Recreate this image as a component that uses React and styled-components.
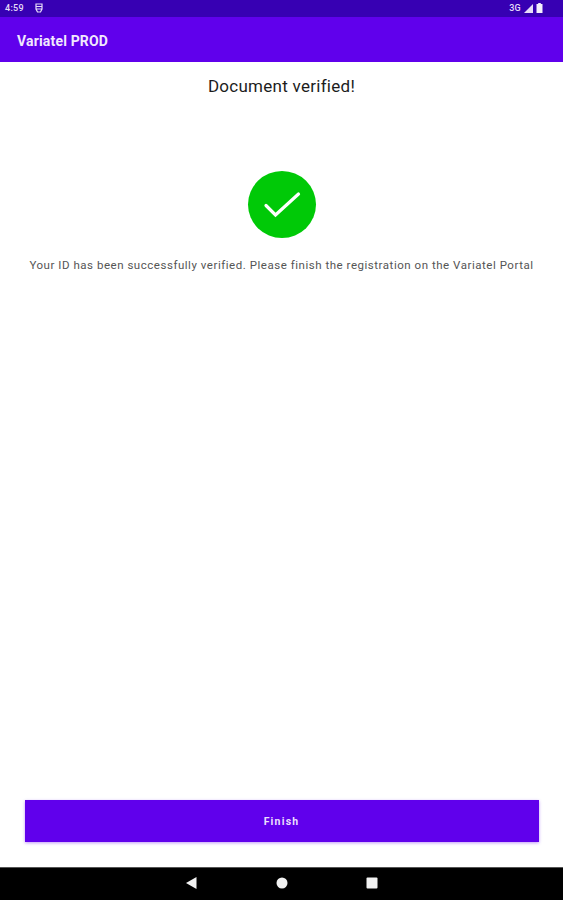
import { createGlobalStyle } from 'styled-components'
import styled from 'styled-components'

const GlobalStyle = createGlobalStyle`
    html, body {
        margin: 0;
        padding: 0;
        background: #ffffff;
    }
    * {
        box-sizing: border-box;
    }
`

const Screen = styled.div`
    width: 563px;
    height: 900px;
    display: flex;
    flex-direction: column;
    font-family: Roboto, "Liberation Sans", sans-serif;
    overflow: hidden;
`

const StatusBar = styled.div`
    height: 17px;
    flex-shrink: 0;
    background: #3700b3;
    color: #e6dcf8;
    display: flex;
    align-items: center;
    justify-content: space-between;
    padding: 0 20px 1px 5px;
    font-size: 9px;
    font-weight: 500;
    letter-spacing: 0.3px;
`

const StatusGroup = styled.div`
    display: flex;
    align-items: center;
    gap: ${({ $gap }) => $gap}px;
`

const AppBar = styled.header`
    height: 45px;
    flex-shrink: 0;
    background: #6000ec;
    color: #f1e8fd;
    display: flex;
    align-items: center;
    padding: 2px 0 0 17px;
    font-size: 14px;
    font-weight: 700;
    letter-spacing: 0.17px;
`

const Content = styled.main`
    flex: 1;
    display: flex;
    flex-direction: column;
    align-items: center;
    padding: 13px 25px 25px;
`

const Title = styled.h1`
    margin: 0;
    font-size: 17px;
    line-height: 22px;
    font-weight: 400;
    letter-spacing: 0.27px;
    color: #1c1c1c;
`

const SuccessBadge = styled.div`
    width: 68px;
    height: 67px;
    margin-top: 74px;
    border-radius: 50%;
    background: #00c907;
    display: flex;
    align-items: center;
    justify-content: center;
`

const Message = styled.p`
    margin: 19px 0 0;
    font-size: 11.5px;
    line-height: 16px;
    letter-spacing: 0.53px;
    color: #555555;
    white-space: nowrap;
`

const FinishButton = styled.button`
    width: 514px;
    height: 42px;
    margin-top: auto;
    border: 0;
    background: #6000ec;
    color: #eadffc;
    font-family: inherit;
    font-size: 10.5px;
    font-weight: 700;
    letter-spacing: 1.2px;
    box-shadow: 0 1px 3px rgba(98, 0, 238, 0.4);
`

const NavBar = styled.nav`
    height: 33px;
    flex-shrink: 0;
    background: #000000;
    border-top: 1px solid #555555;
    display: flex;
    align-items: center;
    justify-content: center;
    gap: 78px;
    padding: 0 0 2px;
`

function CheckIcon() {
    return (
        <svg width="38" height="28" viewBox="0 0 38 28" fill="none">
            <path d="M3 14.5 L12.5 24 L35.5 3" stroke="#ffffff" strokeWidth="3.2" strokeLinecap="round" />
        </svg>
    )
}

function App() {
    return (
        <Screen>
            <GlobalStyle />
            <StatusBar>
                <StatusGroup $gap={11}>
                    <span>4:59</span>
                    <svg width="8" height="10" viewBox="0 0 8 10" fill="none">
                        <path d="M1 1 H7 V6 L5.5 9 H2.5 L1 6 Z M1 3.5 H7 M1 6 H7" stroke="#e6dcf8" strokeWidth="1.2" />
                    </svg>
                </StatusGroup>
                <StatusGroup $gap={3}>
                    <span>3G</span>
                    <svg width="9" height="9" viewBox="0 0 9 9">
                        <path d="M0 9 L9 0 V9 Z" fill="#e6dcf8" />
                    </svg>
                    <svg width="7" height="10" viewBox="0 0 7 10">
                        <path d="M2.2 0 H4.8 V1 H6.5 V10 H0.5 V1 H2.2 Z" fill="#f4effc" />
                    </svg>
                </StatusGroup>
            </StatusBar>
            <AppBar>Variatel PROD</AppBar>
            <Content>
                <Title>Document verified!</Title>
                <SuccessBadge>
                    <CheckIcon />
                </SuccessBadge>
                <Message>Your ID has been successfully verified. Please finish the registration on the Variatel Portal</Message>
                <FinishButton>Finish</FinishButton>
            </Content>
            <NavBar>
                <svg width="12" height="12" viewBox="0 0 12 12">
                    <path d="M10.5 0 V12 L0 6 Z" fill="#f2f2f2" />
                </svg>
                <svg width="12" height="12" viewBox="0 0 12 12">
                    <circle cx="6" cy="6" r="5.5" fill="#f2f2f2" />
                </svg>
                <svg width="12" height="12" viewBox="0 0 12 12">
                    <rect x="0.5" y="0.5" width="11" height="11" rx="1" fill="#f2f2f2" />
                </svg>
            </NavBar>
        </Screen>
    )
}

export default App
